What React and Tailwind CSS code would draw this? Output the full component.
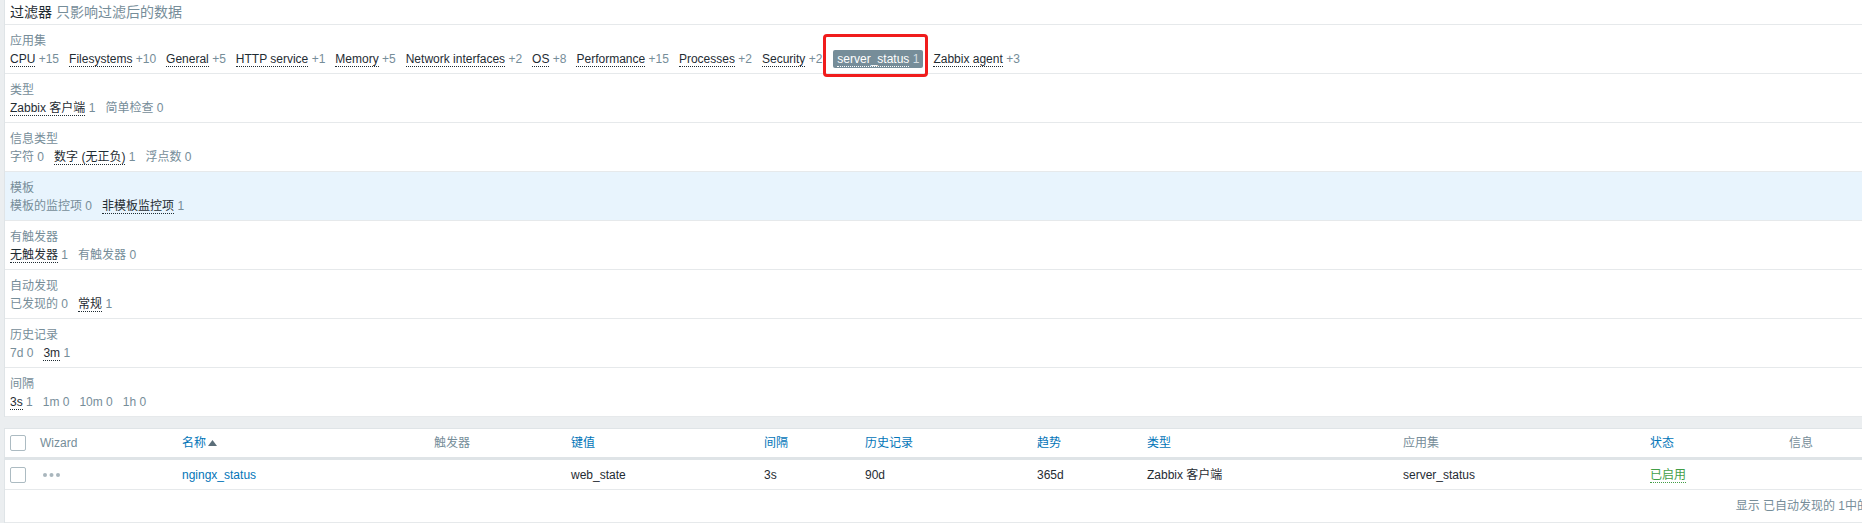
import React from "react";

const subfilters = [
  {
    label: "应用集",
    items: [
      { name: "CPU", count: "+15", link: true },
      { name: "Filesystems", count: "+10", link: true },
      { name: "General", count: "+5", link: true },
      { name: "HTTP service", count: "+1", link: true },
      { name: "Memory", count: "+5", link: true },
      { name: "Network interfaces", count: "+2", link: true },
      { name: "OS", count: "+8", link: true },
      { name: "Performance", count: "+15", link: true },
      { name: "Processes", count: "+2", link: true },
      { name: "Security", count: "+2", link: true },
      { name: "server_status", count: "1", selected: true },
      { name: "Zabbix agent", count: "+3", link: true },
    ],
  },
  {
    label: "类型",
    items: [
      { name: "Zabbix 客户端", count: "1", link: true },
      { name: "简单检查", count: "0" },
    ],
  },
  {
    label: "信息类型",
    items: [
      { name: "字符", count: "0" },
      { name: "数字 (无正负)", count: "1", link: true },
      { name: "浮点数", count: "0" },
    ],
  },
  {
    label: "模板",
    highlight: true,
    items: [
      { name: "模板的监控项", count: "0" },
      { name: "非模板监控项", count: "1", link: true },
    ],
  },
  {
    label: "有触发器",
    items: [
      { name: "无触发器", count: "1", link: true },
      { name: "有触发器", count: "0" },
    ],
  },
  {
    label: "自动发现",
    items: [
      { name: "已发现的", count: "0" },
      { name: "常规", count: "1", link: true },
    ],
  },
  {
    label: "历史记录",
    items: [
      { name: "7d", count: "0" },
      { name: "3m", count: "1", link: true },
    ],
  },
  {
    label: "间隔",
    items: [
      { name: "3s", count: "1", link: true },
      { name: "1m", count: "0" },
      { name: "10m", count: "0" },
      { name: "1h", count: "0" },
    ],
  },
];

const columns = [
  { title: "", checkbox: true },
  { title: "Wizard" },
  { title: "名称", sort: true, sorted: true },
  { title: "触发器" },
  { title: "键值", sort: true },
  { title: "间隔", sort: true },
  { title: "历史记录", sort: true },
  { title: "趋势", sort: true },
  { title: "类型", sort: true },
  { title: "应用集" },
  { title: "状态", sort: true },
  { title: "信息" },
];

const gridCols =
  "grid grid-cols-[30px_142px_252px_137px_193px_101px_172px_110px_256px_247px_139px_1fr]";

function Checkbox() {
  return <span className="block h-4 w-4 rounded-[2px] border border-[#acbbc2] bg-white" />;
}

function SubItem({ it }) {
  if (it.selected) {
    // selected subfilter + the red annotation box around it
    return (
      <span className="relative -my-px ml-px rounded-[2px] bg-[#768d99] px-[4px] py-px text-white">
        <span className="border-b border-dotted border-white">{it.name}</span>{" "}
        <span className="text-[#d4dde1]">{it.count}</span>
        <span className="pointer-events-none absolute -top-[16px] -right-[5px] -bottom-[9px] -left-[10px] rounded-[4px] border-[3px] border-[#f01c1c]" />
      </span>
    );
  }
  if (it.link) {
    return (
      <span className="whitespace-pre">
        <span className="border-b border-dotted border-[#1f2c33] text-[#1f2c33]">{it.name}</span>{" "}
        <span className="text-[#768d99]">{it.count}</span>
      </span>
    );
  }
  return (
    <span className="whitespace-pre text-[#768d99]">
      {it.name} {it.count}
    </span>
  );
}

export default function App() {
  return (
    <div className="h-[523px] w-[1862px] overflow-hidden bg-[#ebeef0] font-['Liberation_Sans','Noto_Sans_CJK_SC',sans-serif] text-[12px] text-[#1f2c33]">
      <div className="w-[1884px] pl-[4px]">
        {/* filter panel */}
        <div className="border-l border-[#dfe4e7] bg-white">
          <div className="h-[25px] border-b border-[#e6e9eb] pl-[5px] pt-[3px] text-[14px] leading-[18px]">
            <span className="text-[#1f2c33]">过滤器</span>{" "}
            <span className="text-[#768d99]">只影响过滤后的数据</span>
          </div>
          {subfilters.map((row) => (
            <div
              key={row.label}
              className={
                "h-[49px] border-b border-[#e6e9eb] pl-[5px] pt-[8px] " +
                (row.highlight ? "bg-[#e8f4fd]" : "bg-white")
              }
            >
              <div className="leading-[16px] text-[#768d99]">{row.label}</div>
              <div className="mt-[2px] flex h-[16px] items-center gap-x-[10px] leading-[16px]">
                {row.items.map((it) => (
                  <SubItem key={it.name} it={it} />
                ))}
              </div>
            </div>
          ))}
        </div>

        {/* items table */}
        <div className="mt-[11px] border-l border-t border-[#dfe4e7] bg-white">
          <div className={gridCols + " h-[31px] items-center border-b-[3px] border-[#dfe4e7]"}>
            {columns.map((c, i) => (
              <div key={i} className="pl-[5px] leading-[16px]">
                {c.checkbox ? (
                  <Checkbox />
                ) : (
                  <span className={c.sort ? "text-[#0275b8]" : "text-[#768d99]"}>
                    {c.title}
                    {c.sorted && (
                      <svg className="ml-[2px] inline-block align-[1px]" width="9" height="6" viewBox="0 0 9 6">
                        <path d="M4.5 0 L9 6 L0 6 Z" fill="#5b6e79" />
                      </svg>
                    )}
                  </span>
                )}
              </div>
            ))}
          </div>
          <div className={gridCols + " h-[30px] items-center border-b border-[#e6e9eb] leading-[16px]"}>
            <div className="pl-[5px]">
              <Checkbox />
            </div>
            <div className="pl-[8px]">
              <svg width="17" height="4" viewBox="0 0 17 4" className="block">
                <circle cx="2" cy="2" r="2" fill="#a9b6bd" />
                <circle cx="8.5" cy="2" r="2" fill="#a9b6bd" />
                <circle cx="15" cy="2" r="2" fill="#a9b6bd" />
              </svg>
            </div>
            <div className="pl-[5px] text-[#0275b8]">ngingx_status</div>
            <div className="pl-[5px]" />
            <div className="pl-[5px]">web_state</div>
            <div className="pl-[5px]">3s</div>
            <div className="pl-[5px]">90d</div>
            <div className="pl-[5px]">365d</div>
            <div className="pl-[5px]">Zabbix 客户端</div>
            <div className="pl-[5px]">server_status</div>
            <div className="pl-[5px]">
              <span className="border-b border-dotted border-[#429e47] text-[#429e47]">已启用</span>
            </div>
            <div className="pl-[5px]" />
          </div>
          <div className="flex h-[33px] items-center justify-end border-b border-[#e6e9eb] pr-[5px] leading-[16px] text-[#768d99]">
            显示 已自动发现的 1中的 1
          </div>
        </div>
      </div>
    </div>
  );
}
